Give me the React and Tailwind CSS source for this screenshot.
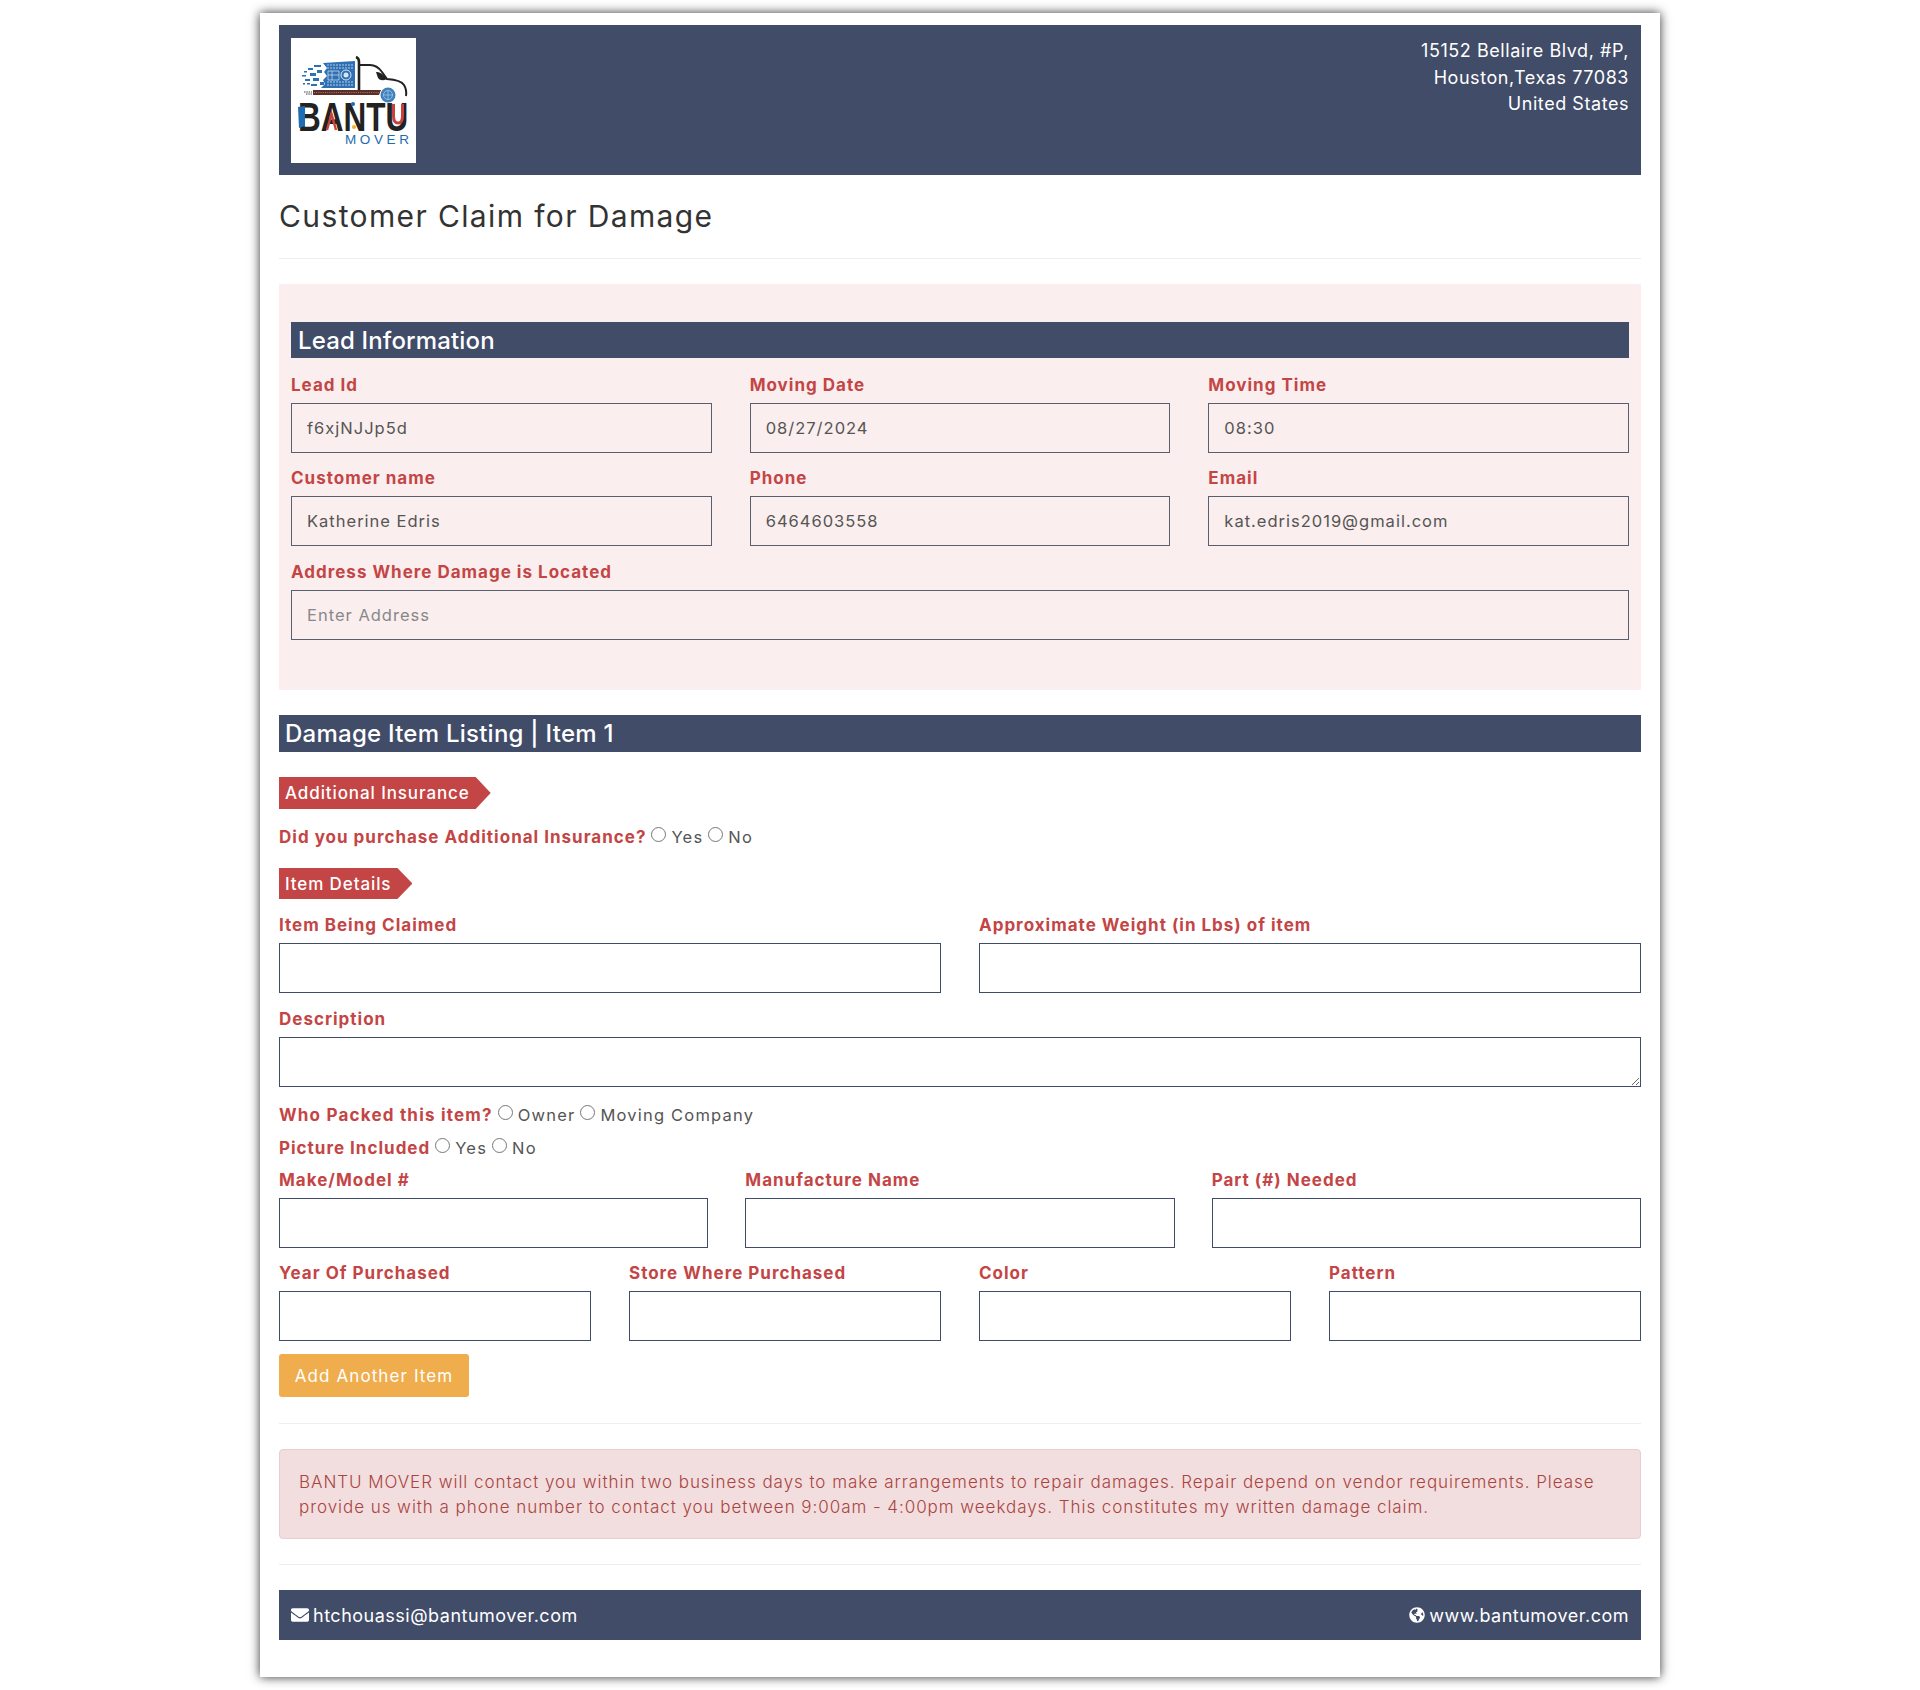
import React from "react";
import { FaEnvelope, FaGlobeAmericas } from "react-icons/fa";

const fontStack = { fontFamily: "Inter, 'Noto Sans', sans-serif" };

function Logo() {
  const tiles = [
    [11, 37, 4, 1.5], [13, 33, 3, 1.5], [14, 41, 5, 2], [17, 30, 5, 2], [19, 35, 6, 3], [22, 40, 6, 3],
    [23, 27, 7, 2], [16, 45, 3, 1.5], [20, 46, 6, 2], [26, 32, 5, 3], [12, 45, 2, 1.5], [29, 44, 4, 3],
  ];
  const rows = [27, 30, 44, 47];
  return (
    <svg width="125" height="125" viewBox="0 0 125 125" className="bg-white">
      {tiles.map((t, i) => (
        <rect key={i} x={t[0]} y={t[1]} width={t[2]} height={t[3]} fill="#2f6fb3" />
      ))}
      <path d="M32 25 L64 23 L64 50 L30 50 L34 46 L32 42 L36 38 L33 34 L36 30 Z" fill="#2f6fb3" />
      {rows.map((y) => (
        <path key={y} d={`M36 ${y} H62`} stroke="#d6e6f4" strokeWidth="0.8" strokeDasharray="2 1" />
      ))}
      <path d="M37 33 H48 V42 H37 Z M41 33 V42 M37 37 H48" stroke="#d6e6f4" strokeWidth="0.7" fill="none" />
      <circle cx="55" cy="37" r="5" fill="none" stroke="#d6e6f4" strokeWidth="1" />
      <circle cx="55" cy="37" r="2.5" fill="#d6e6f4" />
      <path d="M65 19 Q68 20 68 24 V52" stroke="#222" strokeWidth="2.6" fill="none" />
      <path d="M68 27 H79 Q86 27 91 34 L96 41 Q110 42 113 47 Q116 52 115 58" stroke="#222" strokeWidth="2" fill="none" />
      <path d="M85 34 Q90 33 96 41 Q90 44 87 40 Z" fill="#222" />
      <path d="M22 52 H90 L88 57 H22 Z" fill="#5b2f28" />
      <path d="M23 54.5 H88" stroke="#a9746a" strokeWidth="1" strokeDasharray="1 1.2" />
      <path d="M13 54 h8 M15 56 h6" stroke="#444" strokeWidth="1.2" strokeDasharray="1.5 0.8" />
      <circle cx="97" cy="57" r="7.5" fill="#3f80bd" />
      <circle cx="97" cy="57" r="4.5" fill="none" stroke="#a9cce8" strokeWidth="0.8" />
      <path d="M92.5 57 H101.5 M97 52.5 V61.5" stroke="#a9cce8" strokeWidth="0.7" />
      <text transform="translate(7 93) scale(1 1.3)" fontFamily="'Liberation Sans', sans-serif" fontWeight="700" fontSize="31.5" fill="#222">
        BANTU
      </text>
      <path d="M7 69 L14 68 L14 88 L8 90 Z" fill="#1f6cb0" />
      <path d="M102.5 66 V78 Q102.5 85 107 85 Q111.5 85 111.5 78 V66" stroke="#c8413c" strokeWidth="3" fill="none" />
      <path d="M36 92 L40.5 76 L45 92" stroke="#c8413c" strokeWidth="2.4" fill="none" />
      <circle cx="62" cy="66" r="2" fill="#1f6cb0" />
      <circle cx="63" cy="89" r="2" fill="#f0b323" />
      <text x="54" y="106" textLength="64" fontFamily="'Liberation Sans', sans-serif" fontSize="13.5" fill="#1f6cb0">
        MOVER
      </text>
    </svg>
  );
}

function Field({ label, value, placeholder, navy }) {
  return (
    <div className="flex flex-col">
      <label className="mb-[6px] block pt-[2px] text-[17px] leading-[24px] font-bold tracking-[1px] text-[#c44545]">{label}</label>
      <input
        readOnly
        value={value}
        placeholder={placeholder}
        className={`h-[50px] w-full border bg-transparent px-[15px] text-[16.5px] tracking-[1px] text-[#555] outline-none placeholder:text-[#888] ${
          navy ? "border-[#414c68]" : "border-[#5a5f6d]"
        }`}
      />
    </div>
  );
}

function Tag({ children, height }) {
  return (
    <div className="flex">
      <div
        className={`${height} flex items-center pt-[2px] pr-[21px] pl-[6px] text-[17px] font-medium tracking-[0.9px] text-white bg-[#c44545] [clip-path:polygon(0_0,calc(100%-15px)_0,100%_50%,calc(100%-15px)_100%,0_100%)]`}
      >
        {children}
      </div>
    </div>
  );
}

function Radio({ label }) {
  return (
    <label className="inline-flex items-center">
      <input type="radio" className="mr-[5px] ml-[5px] size-[15px] -translate-y-[3px]" />
      <span className="text-[16.5px] tracking-[1.2px] text-[#555]">{label}</span>
    </label>
  );
}

function Question({ label, options, className, labelTracking = "tracking-[1px]" }) {
  return (
    <div className={`flex h-[24px] items-center ${className}`}>
      <span className={`pt-[1px] text-[17px] font-bold text-[#c44545] ${labelTracking}`}>{label}</span>
      {options.map((o) => (
        <Radio key={o} label={o} />
      ))}
    </div>
  );
}

export default function App() {
  return (
    <div style={fontStack} className="min-h-[1690px] bg-white pt-[13px]">
      <div className="mx-auto h-[1664px] w-[1400px] bg-white px-[19px] pt-[12px] shadow-[0_0_10px_#333]">
        {/* cabecera */}
        <div className="flex h-[150px] justify-between bg-[#414c68] py-[13px] pr-[12px] pl-[12px]">
          <Logo />
          <div className="text-right text-[18px] leading-[26.5px] tracking-[0.55px] text-white">
            <p>15152 Bellaire Blvd, #P,</p>
            <p>Houston,Texas 77083</p>
            <p>United States</p>
          </div>
        </div>

        <h1 className="mt-[22px] text-[30px] leading-[38px] tracking-[1.38px] text-[#333]">Customer Claim for Damage</h1>
        <hr className="mt-[23px] border-[#eee]" />

        {/* lead */}
        <div className="mt-[25px] h-[406px] bg-[#faeeee] px-[12px] pt-[38px]">
          <h2 className="h-[36px] bg-[#414c68] pl-[7px] text-[24px] leading-[37px] font-medium tracking-[0.15px] text-white">Lead Information</h2>
          <div className="mt-[13px] grid grid-cols-3 gap-x-[38px] gap-y-[11px]">
            <Field label="Lead Id" value="f6xjNJJp5d" />
            <Field label="Moving Date" value="08/27/2024" />
            <Field label="Moving Time" value="08:30" />
            <Field label="Customer name" value="Katherine Edris" />
            <Field label="Phone" value="6464603558" />
            <Field label="Email" value="kat.edris2019@gmail.com" />
            <div className="col-span-3 mt-[1px]">
              <Field label="Address Where Damage is Located" value="" placeholder="Enter Address" />
            </div>
          </div>
        </div>

        <h2 className="mt-[25px] h-[37px] bg-[#414c68] pl-[6px] text-[24px] leading-[37px] font-medium tracking-[0.25px] text-white">Damage Item Listing | Item 1</h2>

        <div className="mt-[25px]">
          <Tag height="h-[32px]">Additional Insurance</Tag>
        </div>
        <Question className="mt-[16px]" label="Did you purchase Additional Insurance?" options={["Yes", "No"]} />
        <div className="mt-[19px]">
          <Tag height="h-[31px]">Item Details</Tag>
        </div>

        <div className="mt-[12px] grid grid-cols-2 gap-x-[38px] gap-y-[12px]">
          <Field navy label="Item Being Claimed" value="" />
          <Field navy label="Approximate Weight (in Lbs) of item" value="" />
          <div className="col-span-2 flex flex-col">
            <label className="mb-[6px] pt-[2px] text-[17px] leading-[24px] font-bold tracking-[1px] text-[#c44545]">Description</label>
            <textarea readOnly className="block h-[50px] w-full border border-[#414c68] bg-transparent outline-none" />
          </div>
        </div>

        <Question className="mt-[16px]" labelTracking="tracking-[1.2px]" label="Who Packed this item?" options={["Owner", "Moving Company"]} />
        <Question className="mt-[9px]" label="Picture Included" options={["Yes", "No"]} />

        <div className="mt-[6px] grid grid-cols-3 gap-x-[37px]">
          <Field navy label="Make/Model #" value="" />
          <Field navy label="Manufacture Name" value="" />
          <Field navy label="Part (#) Needed" value="" />
        </div>
        <div className="mt-[11px] grid grid-cols-4 gap-x-[38px]">
          <Field navy label="Year Of Purchased" value="" />
          <Field navy label="Store Where Purchased" value="" />
          <Field navy label="Color" value="" />
          <Field navy label="Pattern" value="" />
        </div>

        <button className="mt-[13px] block h-[43px] w-[190px] rounded-[3px] bg-[#f0ad4e] pt-[2px] text-[17px] tracking-[1.1px] text-white">Add Another Item</button>

        <hr className="mt-[26px] border-[#eee]" />

        <div className="mt-[25px] h-[90px] rounded-[4px] border border-[#ebccd1] bg-[#f2dede] px-[19px] pt-[20px] text-[17px] leading-[25px] font-light tracking-[0.95px] text-[#a94442]">
          BANTU MOVER will contact you within two business days to make arrangements to repair damages. Repair depend on vendor requirements. Please provide us with a phone number to contact you between 9:00am - 4:00pm weekdays. This constitutes my written damage claim.
        </div>

        <hr className="mt-[25px] border-[#eee]" />

        <div className="mt-[25px] flex h-[50px] items-center justify-between bg-[#414c68] px-[12px] text-[18px] tracking-[0.5px] text-white">
          <span className="flex items-center gap-[4px]">
            <FaEnvelope className="size-[18px]" />
            htchouassi@bantumover.com
          </span>
          <span className="flex items-center gap-[4px]">
            <FaGlobeAmericas className="size-[16px]" />
            www.bantumover.com
          </span>
        </div>
      </div>
    </div>
  );
}
